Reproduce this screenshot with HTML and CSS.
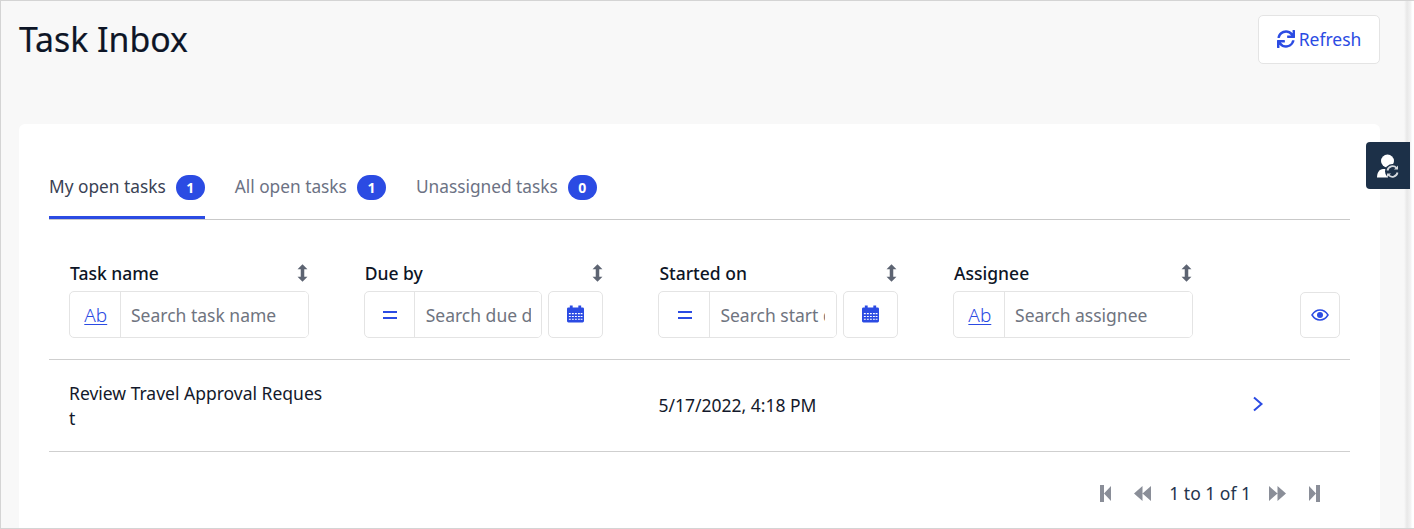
FILE: index.html
```html
<!DOCTYPE html>
<html lang="en">

<head>
    <meta charset="UTF-8">
    <meta name="viewport" content="width=device-width, initial-scale=1.0">
    <title>Task Inbox</title>
    <link rel="stylesheet" href="styles.css">
</head>

<body>
    <svg class="sprites" width="0" height="0">
        <symbol id="sort" viewBox="0 0 10 16">
            <path d="M5 0 9.5 4.6 H6.6 V11.4 H9.5 L5 16 0.5 11.4 H3.4 V4.6 H0.5 Z" />
        </symbol>
        <symbol id="calendar" viewBox="0 0 18 18">
            <path d="M3 0h3v2h6V0h3v2h1.500A1.500 1.500 0 0 1 18 3.500V6H0V3.500A1.500 1.500 0 0 1 1.500 2H3zM0 6h18v10.500a1.500 1.500 0 0 1-1.500 1.500h-15A1.500 1.500 0 0 1 0 16.500z" />
            <path class="cal-cells" d="M2 8h2v1.200H2zM5.200 8h2v1.200h-2zM8.400 8h2v1.200h-2zM11.600 8h2v1.200h-2zM14.400 8h2v1.200h-2zM2 11h2v1.200H2zM5.200 11h2v1.200h-2zM8.400 11h2v1.200h-2zM11.600 11h2v1.200h-2zM14.400 11h2v1.200h-2zM2 14h2v1.200H2zM5.200 14h2v1.200h-2zM8.400 14h2v1.200h-2zM11.600 14h2v1.200h-2zM14.400 14h2v1.200h-2z" />
        </symbol>
    </svg>

    <div class="page">
        <div class="page-head">
            <h1>Task Inbox</h1>
            <button class="btn-refresh">
                <svg class="icon-refresh" viewBox="0 0 512 512"><path d="M440.65 12.57l4 82.77A247.16 247.16 0 0 0 255.83 8C134.73 8 33.91 94.92 12.29 209.82A12 12 0 0 0 24.09 224h49.05a12 12 0 0 0 11.67-9.26 175.91 175.91 0 0 1 317-56.94l-101.46-4.86a12 12 0 0 0-12.57 12v47.41a12 12 0 0 0 12 12H500a12 12 0 0 0 12-12V12a12 12 0 0 0-12-12h-47.37a12 12 0 0 0-11.98 12.57zM255.83 432a175.61 175.61 0 0 1-146-77.8l101.8 4.87a12 12 0 0 0 12.57-12v-47.4a12 12 0 0 0-12-12H12a12 12 0 0 0-12 12V500a12 12 0 0 0 12 12h47.35a12 12 0 0 0 12-12.6l-4.15-82.57A247.17 247.17 0 0 0 255.83 504c121.11 0 221.93-86.92 243.55-201.82a12 12 0 0 0-11.8-14.18h-49.05a12 12 0 0 0-11.67 9.26A175.86 175.86 0 0 1 255.83 432z" /></svg>
                Refresh
            </button>
        </div>

        <div class="card">
            <div class="tabs">
                <a class="tab active">My open tasks <span class="badge">1</span></a>
                <a class="tab">All open tasks <span class="badge">1</span></a>
                <a class="tab">Unassigned tasks <span class="badge">0</span></a>
            </div>

            <div class="grid-row filters">
                <div class="col">
                    <div class="col-title">Task name <svg class="icon-sort"><use href="#sort" /></svg></div>
                    <div class="filter">
                        <div class="input-group wide">
                            <span class="addon addon-ab">Ab</span>
                            <input type="text" placeholder="Search task name">
                        </div>
                    </div>
                </div>
                <div class="col">
                    <div class="col-title">Due by <svg class="icon-sort"><use href="#sort" /></svg></div>
                    <div class="filter">
                        <div class="input-group">
                            <span class="addon"><span class="equals"></span></span>
                            <input type="text" placeholder="Search due date">
                        </div>
                        <button class="btn-icon"><svg class="icon-cal"><use href="#calendar" /></svg></button>
                    </div>
                </div>
                <div class="col">
                    <div class="col-title">Started on <svg class="icon-sort"><use href="#sort" /></svg></div>
                    <div class="filter">
                        <div class="input-group">
                            <span class="addon"><span class="equals"></span></span>
                            <input type="text" placeholder="Search start date">
                        </div>
                        <button class="btn-icon"><svg class="icon-cal"><use href="#calendar" /></svg></button>
                    </div>
                </div>
                <div class="col">
                    <div class="col-title">Assignee <svg class="icon-sort"><use href="#sort" /></svg></div>
                    <div class="filter">
                        <div class="input-group wide">
                            <span class="addon addon-ab">Ab</span>
                            <input type="text" placeholder="Search assignee">
                        </div>
                    </div>
                </div>
                <div class="col col-actions">
                    <button class="btn-eye">
                        <svg class="icon-eye" viewBox="0 0 18 12">
                            <path class="eye-line" d="M1 6C3 2.800 5.800 1 9 1s6 1.800 8 5c-2 3.200-4.800 5-8 5S3 9.200 1 6z" />
                            <circle cx="9" cy="6" r="3" />
                        </svg>
                    </button>
                </div>
            </div>

            <div class="grid-row task-row">
                <div class="col"><div class="task-name">Review Travel Approval Request</div></div>
                <div class="col"></div>
                <div class="col"><div class="task-date">5/17/2022, 4:18 PM</div></div>
                <div class="col"></div>
                <div class="col col-open">
                    <svg class="icon-chevron" viewBox="0 0 12 16"><path d="M2 1.500 9.500 8 2 14.500" /></svg>
                </div>
            </div>

            <div class="pager">
                <svg class="pg pg-edge" viewBox="0 0 11 17"><path d="M0 0h4v17H0zM4 8.500 11 1v15z" /></svg>
                <svg class="pg pg-double" viewBox="0 0 17 17"><path d="M0 8.500 8.500 1v15zM8.500 8.500 17 1v15z" /></svg>
                <span class="pg-text">1 to 1 of 1</span>
                <svg class="pg pg-double" viewBox="0 0 17 17"><path d="M17 8.500 8.500 1v15zM8.500 8.500 0 1v15z" /></svg>
                <svg class="pg pg-edge" viewBox="0 0 11 17"><path d="M11 0H7v17h4zM7 8.500 0 1v15z" /></svg>
            </div>
        </div>
    </div>

    <div class="side-tab">
        <svg viewBox="0 0 24 24" class="icon-user">
            <circle cx="11.500" cy="7" r="6.500" />
            <path d="M1 23.500c0-5 2.500-8.500 6-8.500h5v8.500z" />
            <circle class="sync-bg" cx="16.500" cy="17.500" r="7.500" />
            <path class="sync" d="M11.500 16.500a5.200 5.200 0 0 1 9-2.500M21.500 18.500a5.200 5.200 0 0 1-9 2.500" />
            <path class="sync-tip" d="M22 11.500v4h-4zM11 23.500v-4h4z" />
        </svg>
    </div>
</body>

</html>
```
FILE: styles.css
```css
* {
    box-sizing: border-box;
}

html,
body {
    height: 100%;
}

body {
    margin: 0;
    overflow: hidden;
    position: relative;
    font-family: "Noto Sans", Arial, sans-serif;
    font-size: 17.500px;
    color: #13192b;
    background: #f8f8f8;
}

.sprites {
    position: absolute;
}

.page {
    height: 529px;
    padding-left: 18px;
    padding-right: 34px;
    border-top: 1px solid #d4d4d4;
    border-left: 1px solid #d4d4d4;
    border-bottom: 1px solid #d4d4d4;
    overflow: hidden;
    background: linear-gradient(to right, #f8f8f8 1403px, #e8e8e8 1406px, #f4f4f4 1410px, #fff 1411px);
}

.page-head {
    display: flex;
    justify-content: space-between;
    align-items: flex-start;
    height: 123px;
    padding-top: 14px;
}

h1 {
    margin: 0;
    font-size: 33.800px;
    font-weight: 400;
    line-height: 48px;
    color: #0d1526;
    -webkit-text-stroke: 0.2px #0d1526;
}

.btn-refresh {
    display: flex;
    align-items: center;
    justify-content: center;
    gap: 4px;
    width: 122px;
    height: 49px;
    padding: 0 0 2px;
    background: #fff;
    border: 1px solid #e4e4e4;
    border-radius: 5px;
    font-family: inherit;
    font-size: 17.500px;
    color: #2b4be3;
}

.icon-refresh {
    width: 18px;
    height: 18px;
    fill: #2b4be3;
}

.card {
    height: 420px;
    padding: 30px 30px 0;
    background: #fff;
    border-radius: 6px 6px 0 0;
}

.tabs {
    display: flex;
    gap: 30px;
    height: 66px;
    padding-top: 16px;
    border-bottom: 1px solid #c9c9c9;
}

.tab {
    display: flex;
    align-items: flex-start;
    gap: 10px;
    height: 49px;
    font-size: 17.300px;
    line-height: 28px;
    color: #6c7284;
    padding-top: 3px;
}

.tab.active {
    color: #3a4254;
    border-bottom: 3px solid #2b4be3;
}

.badge {
    display: block;
    width: 29px;
    height: 25px;
    margin-top: 2px;
    border-radius: 13px;
    background: #2b4be3;
    color: #fff;
    font-size: 14px;
    font-weight: 700;
    line-height: 25px;
    text-align: center;
}

.grid-row {
    display: grid;
    grid-template-columns: repeat(4, 294.700px) 1fr;
    border-bottom: 1px solid #cfcfcf;
}

.filters {
    height: 140px;
    padding-top: 40px;
}

.col {
    padding-left: 20px;
    min-width: 0;
}

.col-title {
    display: flex;
    justify-content: space-between;
    align-items: center;
    width: 239px;
    height: 26px;
    padding-left: 1px;
    margin-bottom: 5px;
    font-size: 17.500px;
    font-weight: 500;
    color: #0d1526;
}

.icon-sort {
    width: 11px;
    height: 18px;
    fill: #5d6472;
}

.filter {
    display: flex;
    gap: 6px;
    height: 47px;
}

.input-group {
    display: flex;
    width: 178.400px;
    height: 47px;
    background: #fff;
    border: 1px solid #e4e4e4;
    border-radius: 5px;
    overflow: hidden;
}

.input-group.wide {
    width: 240px;
}

.addon {
    display: flex;
    align-items: center;
    justify-content: center;
    flex: none;
    width: 50.500px;
    border-right: 1px solid #e4e4e4;
    color: #2b4be3;
}

.addon-ab {
    padding-left: 2px;
    font-size: 19px;
    font-weight: 300;
    text-decoration: underline;
    text-underline-offset: 2px;
    text-decoration-thickness: 1px;
}

.equals {
    display: block;
    width: 14px;
    height: 8px;
    margin-left: 1px;
    border-top: 2px solid #2b4be3;
    border-bottom: 2px solid #2b4be3;
}

input {
    flex: 1;
    min-width: 0;
    border: 0;
    outline: 0;
    padding: 0 10.500px;
    font-family: inherit;
    font-size: 17.500px;
    color: #13192b;
}

input::placeholder {
    color: #6f7480;
    opacity: 1;
}

.btn-icon,
.btn-eye {
    display: flex;
    align-items: center;
    justify-content: center;
    padding: 0;
    background: #fff;
    border: 1px solid #e4e4e4;
    border-radius: 5px;
}

.btn-icon {
    width: 55px;
    height: 47px;
    padding-bottom: 2px;
}

.icon-cal {
    width: 17px;
    height: 18px;
    fill: #2b4be3;
}

.cal-cells {
    fill: #fff;
}

.col-actions {
    padding: 32px 0 0 0;
}

.btn-eye {
    width: 40px;
    height: 46px;
    margin-left: 72px;
}

.icon-eye {
    width: 18px;
    height: 12px;
    fill: #2b4be3;
}

.eye-line {
    fill: none;
    stroke: #2b4be3;
    stroke-width: 1.500;
}

.task-row {
    height: 92px;
    align-items: center;
}

.task-name {
    width: 256px;
    line-height: 25px;
    word-break: break-all;
}

.task-date {
    margin-top: -1px;
}

.col-open {
    display: flex;
    padding-left: 24px;
}

.icon-chevron {
    width: 12px;
    height: 16px;
    margin-top: -4px;
    fill: none;
    stroke: #2b4be3;
    stroke-width: 2;
}

.pager {
    display: flex;
    align-items: center;
    justify-content: flex-end;
    height: 82px;
    padding-right: 30px;
    fill: #8a8e98;
}

.pg-text {
    margin: 0 18px;
    font-size: 17.500px;
    color: #24344d;
}

.pg-edge {
    width: 11px;
    height: 17px;
}

.pg-double {
    width: 17px;
    height: 17px;
}

.pg-edge + .pg-double,
.pg-double + .pg-edge {
    margin-left: 23px;
}

.side-tab {
    position: absolute;
    top: 142px;
    left: 1366px;
    display: flex;
    align-items: center;
    justify-content: center;
    width: 44px;
    height: 47px;
    background: #1c3048;
    border-radius: 4px 0 0 4px;
}

.icon-user {
    width: 24px;
    height: 24px;
    fill: #fff;
}

.sync-bg {
    fill: #1c3048;
}

.sync {
    fill: none;
    stroke: #d5d9de;
    stroke-width: 1.800;
}

.sync-tip {
    fill: #d5d9de;
}
```
